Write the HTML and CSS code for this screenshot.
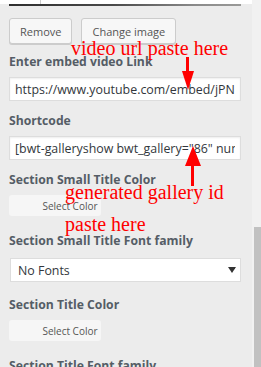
FILE: index.html
```html
<!DOCTYPE html>
<html lang="en">
<head>
  <meta charset="UTF-8">
  <meta name="viewport" content="width=device-width, initial-scale=1.0">
  <title>Gallery settings</title>
  <link rel="stylesheet" href="styles.css">
</head>
<body>

  <div class="panel">
    <div class="preview">
      <div class="preview-img"></div>
    </div>

    <div class="actions">
      <button class="btn">Remove</button>
      <button class="btn">Change image</button>
    </div>

    <div class="field">
      <label for="video">Enter embed video Link</label>
      <input type="text" id="video" value="https://www.youtube.com/embed/jPNlkmQrwW8">
    </div>

    <div class="field">
      <label for="shortcode">Shortcode</label>
      <input type="text" id="shortcode" value='[bwt-galleryshow bwt_gallery="86" num="10"]'>
    </div>

    <div class="field">
      <label>Section Small Title Color</label>
      <button class="color-btn">Select Color</button>
    </div>

    <div class="field field-select">
      <label for="small-font">Section Small Title Font family</label>
      <div class="select-wrap">
        <select id="small-font">
          <option>No Fonts</option>
        </select>
      </div>
    </div>

    <div class="field">
      <label>Section Title Color</label>
      <button class="color-btn">Select Color</button>
    </div>

    <div class="field field-last">
      <label>Section Title Font family</label>
    </div>

    <!-- annotations drawn over the screenshot -->
    <div class="note note-video">video url paste here</div>
    <div class="arrow arrow-down"></div>
    <div class="note note-id">generated gallery id<br>paste here</div>
    <div class="arrow arrow-up"></div>
  </div>

  <div class="scrollbar">
    <div class="scrollbar-thumb"></div>
  </div>

</body>
</html>
```

FILE: styles.css
```css
html, body {
  height: 100%;
}

body {
  margin: 0;
  display: flex;
  overflow: hidden;
  background: #ececec;
  font-family: "Open Sans", "Liberation Sans", sans-serif;
  color: #32373c;
}

.panel {
  position: relative;
  flex: 1;
  padding: 0 11px 0 9px;
}

.preview {
  height: 4px;
  margin: 0 -11px 0 -9px;
  background: #fff;
  position: relative;
}

.preview::after {
  content: "";
  position: absolute;
  left: 40px;
  top: 0;
  width: 1px;
  height: 4px;
  background: #ccc;
}

.preview-img {
  position: relative;
  top: 4px;
  margin: 0 11px 0 9px;
  height: 2px;
  background: linear-gradient(90deg, #2f2f2f 0%, #4a4a4a 45%, #8a8a8a 80%, #9a9a98 100%);
}

.actions {
  display: flex;
  gap: 9px;
  margin-top: 14px;
}

.btn {
  height: 26px;
  padding: 0 10px;
  background: #f7f7f7;
  border: 1px solid #ccc;
  border-radius: 3px;
  box-shadow: 0 1px 0 #ccc;
  color: #555;
  font-family: "Open Sans", "Liberation Sans", sans-serif;
  font-size: 11px;
}

.field {
  margin-top: 9px;
}

.field label {
  display: block;
  margin-bottom: 6px;
  font-size: 12.2px;
  font-weight: 700;
  line-height: 18px;
  color: #555d66;
}

.field input {
  display: block;
  box-sizing: border-box;
  width: 100%;
  height: 24px;
  margin: 0;
  padding: 0 5px;
  background: #fff;
  border: 1px solid #ddd;
  box-shadow: inset 0 1px 2px rgba(0, 0, 0, 0.07);
  color: #32373c;
  font-family: "Open Sans", "Liberation Sans", sans-serif;
  font-size: 12.4px;
  outline: none;
}

.color-btn {
  display: block;
  width: 92px;
  height: 21px;
  padding: 0 0 0 30px;
  background: #f6f6f6;
  border: none;
  border-radius: 3px;
  color: #555;
  font-family: "Open Sans", "Liberation Sans", sans-serif;
  font-size: 10px;
}

.field + .field {
  margin-top: 11px;
}

.field-select,
.field-last {
  margin-top: 16px !important;
}

.field-select + .field {
  margin-top: 14px !important;
}

.field-select label {
  margin-bottom: 8px;
}

.select-wrap {
  position: relative;
  margin-left: 1px;
}

.select-wrap::after {
  content: "";
  position: absolute;
  right: 5px;
  top: 9px;
  border-left: 4px solid transparent;
  border-right: 4px solid transparent;
  border-top: 6px solid #333;
}

.select-wrap select {
  display: block;
  box-sizing: border-box;
  width: 100%;
  height: 24px;
  padding: 0 7px;
  appearance: none;
  -webkit-appearance: none;
  background: #fff;
  border: 1px solid #ddd;
  border-radius: 0;
  color: #32373c;
  font-family: "Open Sans", "Liberation Sans", sans-serif;
  font-size: 12.4px;
}

.note {
  position: absolute;
  color: #ff0000;
  font-family: "Liberation Serif", serif;
  font-size: 20px;
  white-space: nowrap;
}

.note-video {
  left: 71px;
  top: 37px;
  line-height: 23px;
}

.note-id {
  left: 65px;
  top: 176px;
  line-height: 32px;
}

.arrow {
  position: absolute;
  width: 3px;
  background: #ff0000;
}

.arrow::after {
  content: "";
  position: absolute;
  left: 50%;
  width: 0;
  height: 0;
}

.arrow-down {
  left: 186px;
  top: 57px;
  height: 14px;
}

.arrow-down::after {
  top: 14px;
  margin-left: -6px;
  border-left: 6px solid transparent;
  border-right: 6px solid transparent;
  border-top: 19px solid #ff0000;
}

.arrow-up {
  left: 191px;
  top: 166px;
  height: 20px;
}

.arrow-up::after {
  bottom: 20px;
  margin-left: -8px;
  border-left: 8px solid transparent;
  border-right: 8px solid transparent;
  border-bottom: 20px solid #ff0000;
}

.scrollbar {
  width: 9px;
  background: #f1f1f1;
  display: flex;
  flex-direction: column;
  justify-content: flex-end;
}

.scrollbar-thumb {
  height: 140px;
  margin-left: 2px;
  background: #c1c1c1;
}
```
